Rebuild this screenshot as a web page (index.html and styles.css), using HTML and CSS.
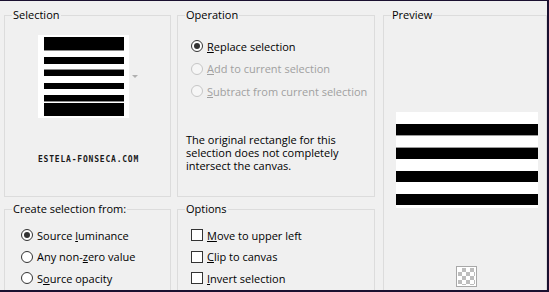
FILE: index.html
```html
<!DOCTYPE html>
<html>

<head>
  <title>Selection from mask</title>
  <link rel="stylesheet" href="styles.css">
</head>

<body>
  <div class="window">
    <div class="dialog">
      <!-- Selection source -->
      <section class="group group-sel">
        <div class="group-title">Selection</div>
        <div class="thumb-row">
          <div class="thumb">
            <svg width="91" height="83" viewBox="0 0 91 83">
              <rect x="0" y="0" width="91" height="83" fill="#fff" />
              <rect x="6" y="2" width="80" height="13" fill="#000" />
              <rect x="6" y="15" width="80" height="1" fill="#8a8a8a" />
              <rect x="6" y="22" width="80" height="7" fill="#000" />
              <rect x="6" y="34" width="80" height="1" fill="#8a8a8a" />
              <rect x="6" y="35" width="80" height="6" fill="#000" />
              <rect x="6" y="48" width="80" height="6" fill="#000" />
              <rect x="6" y="60" width="80" height="6" fill="#000" />
              <rect x="6" y="66" width="80" height="1" fill="#8a8a8a" />
              <rect x="6" y="68" width="80" height="13" fill="#000" />
            </svg>
          </div>
          <span class="drop-arrow"></span>
        </div>
        <div class="watermark">ESTELA-FONSECA.COM</div>
      </section>

      <!-- Operation -->
      <section class="group group-op">
        <div class="group-title">Operation</div>
        <div class="choices choices-op">
          <div class="choice"><span class="radio checked"></span><span><u>R</u>eplace selection</span></div>
          <div class="choice disabled"><span class="radio"></span><span><u>A</u>dd to current selection</span></div>
          <div class="choice disabled"><span class="radio"></span><span><u>S</u>ubtract from current selection</span></div>
        </div>
        <p class="note">The original rectangle for this<br>selection does not completely<br>intersect the canvas.</p>
      </section>

      <!-- Preview -->
      <section class="group group-preview">
        <div class="group-title">Preview</div>
        <div class="preview-img">
          <svg width="142" height="96" viewBox="0 0 142 96">
            <rect x="0" y="0" width="142" height="96" fill="#fff" />
            <rect x="0" y="12" width="142" height="11" fill="#000" />
            <rect x="0" y="23" width="142" height="1" fill="#9a9a9a" />
            <rect x="0" y="35" width="142" height="1" fill="#9a9a9a" />
            <rect x="0" y="36" width="142" height="11" fill="#000" />
            <rect x="0" y="59" width="142" height="11" fill="#000" />
            <rect x="0" y="82" width="142" height="11" fill="#000" />
          </svg>
        </div>
        <div class="checker"><span></span></div>
      </section>

      <!-- Create selection from -->
      <section class="group group-create">
        <div class="group-title">Create selection from:</div>
        <div class="choices choices-create">
          <div class="choice"><span class="radio checked"></span><span>Source <u>l</u>uminance</span></div>
          <div class="choice"><span class="radio"></span><span>Any non-<u>z</u>ero value</span></div>
          <div class="choice"><span class="radio"></span><span>S<u>o</u>urce opacity</span></div>
        </div>
      </section>

      <!-- Options -->
      <section class="group group-options">
        <div class="group-title">Options</div>
        <div class="choices choices-options">
          <div class="choice"><span class="check"></span><span><u>M</u>ove to upper left</span></div>
          <div class="choice"><span class="check"></span><span><u>C</u>lip to canvas</span></div>
          <div class="choice"><span class="check"></span><span><u>I</u>nvert selection</span></div>
        </div>
      </section>
    </div>
  </div>
</body>

</html>
```

FILE: styles.css
```css
body {
  margin: 0;
  padding: 0;
  font-family: "Open Sans", "Noto Sans", sans-serif;
  font-size: 11px;
  color: #000;
}

.window {
  width: 549px;
  height: 292px;
  box-sizing: border-box;
  background-color: #f0f0f0;
  border-top: 1px solid #1a1030;
  border-right: 2px solid #1a1030;
  border-bottom: 2px solid #1a1030;
  overflow: hidden;
}

.dialog {
  display: grid;
  grid-template-columns: 167px 198px 166px;
  grid-template-rows: 182px 90px;
  column-gap: 6px;
  row-gap: 12px;
  padding: 14px 0 0 4px;
}

.group {
  border: 1px solid #dcdcdc;
  box-sizing: border-box;
  min-width: 0;
}

.group-title {
  width: fit-content;
  margin: -9px 0 0 7px;
  padding: 0 1px;
  line-height: 16px;
  background-color: #f0f0f0;
}

.group-preview {
  grid-column: 3;
  grid-row: 1 / span 2;
  margin-left: 2px;
}

.group-create {
  grid-column: 1;
  grid-row: 2;
}

.group-options {
  grid-column: 2;
  grid-row: 2;
}

/* selection thumbnail */
.thumb-row {
  display: flex;
  align-items: center;
  margin-top: 12px;
  padding-left: 33px;
}

.thumb {
  width: 91px;
  height: 83px;
}

.thumb svg,
.preview-img svg {
  display: block;
}

.drop-arrow {
  width: 0;
  height: 0;
  margin-left: 3px;
  border-left: 3px solid transparent;
  border-right: 3px solid transparent;
  border-top: 3px solid #b0b0b0;
}

.watermark {
  margin-top: 37px;
  padding-left: 33px;
  font-family: "DejaVu Sans Mono", monospace;
  font-weight: bold;
  font-size: 8px;
  line-height: 10px;
  letter-spacing: 0.8px;
  color: #1a1a1a;
}

/* radio and check lists */
.choices-op {
  padding: 12px 0 0 13px;
}

.choices-op .choice {
  height: 22.5px;
}

.choices-create {
  padding: 7.5px 0 0 16px;
}

.choices-create .choice,
.choices-options .choice {
  height: 21.5px;
}

.choices-options {
  padding: 7.5px 0 0 13px;
}

.choice {
  display: flex;
  align-items: center;
  gap: 4px;
  white-space: nowrap;
}

.choice.disabled {
  color: #a0a0a0;
}

.radio {
  width: 12px;
  height: 12px;
  box-sizing: border-box;
  border: 1px solid #333;
  border-radius: 50%;
  background-color: #fff;
  display: flex;
  align-items: center;
  justify-content: center;
  flex-shrink: 0;
}

.radio.checked::after {
  content: "";
  width: 6px;
  height: 6px;
  border-radius: 50%;
  background-color: #333;
}

.disabled .radio {
  border-color: #c6c6c6;
  background-color: #f6f6f6;
}

.check {
  width: 12px;
  height: 12px;
  box-sizing: border-box;
  border: 1px solid #333;
  background-color: #fff;
  flex-shrink: 0;
}

.note {
  margin: 30px 0 0 8px;
  line-height: 13px;
}

/* preview */
.preview-img {
  margin: 89px 0 0 12px;
  width: 142px;
  height: 96px;
}

.checker {
  width: 21px;
  height: 21px;
  box-sizing: border-box;
  margin: 58px 0 0 72px;
  border: 1px solid #a8a8a8;
  padding: 1px;
  background-color: #fff;
}

.checker span {
  display: block;
  width: 100%;
  height: 100%;
  background: conic-gradient(#bdbdbd 25%, #fff 0 50%, #bdbdbd 0 75%, #fff 0) 0 0 / 8px 8px;
}
```
